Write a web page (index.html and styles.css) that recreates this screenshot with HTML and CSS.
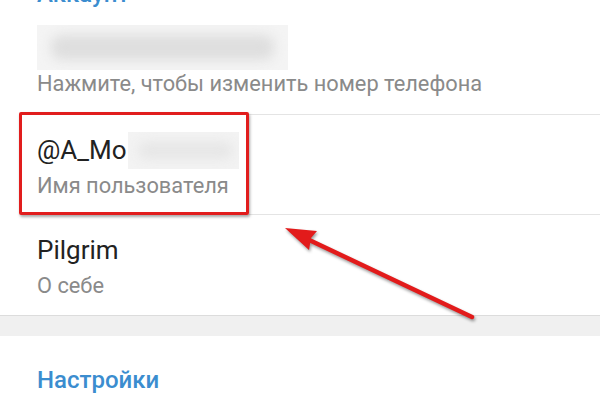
FILE: index.html
```html
<!DOCTYPE html>
<html lang="ru">
<head>
<meta charset="utf-8">
<link rel="stylesheet" href="styles.css">
</head>
<body>
<div class="page">
  <section class="section">
    <div class="section-title section-title--top">Аккаунт</div>
    <div class="row row--first">
      <div class="blur blur--phone"><span class="blur-core"></span></div>
      <div class="label">Нажмите, чтобы изменить номер телефона</div>
    </div>
    <div class="row">
      <div class="value">@A_Mo<span class="blur blur--name"><span class="blur-core"></span></span></div>
      <div class="label">Имя пользователя</div>
    </div>
    <div class="row row--last">
      <div class="value">Pilgrim</div>
      <div class="label">О себе</div>
    </div>
  </section>
  <div class="band"></div>
  <section class="section">
    <div class="section-title section-title--settings">Настройки</div>
  </section>

  <div class="highlight"></div>
  <svg class="arrow" width="600" height="400" viewBox="0 0 600 400">
    <line x1="472" y1="317" x2="305" y2="238" stroke="#e21b1b" stroke-width="4.5" stroke-linecap="round"/>
    <polygon points="285,228 317,231 311,238 309,250" fill="#e21b1b"/>
  </svg>
</div>
</body>
</html>
```
FILE: styles.css
```css
* { box-sizing: border-box; }
html, body {
  margin: 0;
  padding: 0;
  background: #ffffff;
  overflow: hidden;
}
.page {
  position: relative;
  width: 600px;
  height: 400px;
  overflow: hidden;
  font-family: Roboto, "Noto Sans", "Liberation Sans", sans-serif;
}
.section {
  background: #ffffff;
}
.section-title {
  padding-left: 37px;
  font-size: 24px;
  line-height: 28px;
  font-weight: 500;
  color: #3b8dcf;
}
.section-title--top {
  margin-top: -20px;
}
.section-title--settings {
  padding-top: 30px;
}
.row {
  margin-left: 37px;
  padding-top: 19px;
  padding-bottom: 14px;
  border-bottom: 1px solid #e4e4e4;
}
.row--first {
  padding-top: 17px;
  padding-bottom: 16px;
}
.row--last {
  border-bottom: 1px solid #dcdcdc;
  margin-left: 0;
  padding-left: 37px;
  padding-bottom: 15px;
}
.value {
  height: 32px;
  font-size: 26px;
  line-height: 32px;
  color: #222222;
  display: flex;
  align-items: center;
}
.label {
  margin-top: 6px;
  font-size: 21.8px;
  line-height: 28px;
  color: #8a8a8a;
}
.row--first .label {
  margin-top: 0;
}
.blur {
  display: block;
  position: relative;
  overflow: hidden;
  background: #f4f4f4;
}
.blur-core {
  position: absolute;
  left: 14px;
  right: 14px;
  top: 10px;
  bottom: 10px;
  background: #dedede;
  filter: blur(6px);
  border-radius: 10px;
}
.blur--phone {
  width: 251px;
  height: 45px;
}
.blur--name {
  flex: none;
  width: 111px;
  height: 37px;
  margin-left: 1px;
  background: #f3f3f3;
}
.blur--name .blur-core {
  background: #e6e6e6;
  left: 10px;
  right: 6px;
}
.band {
  height: 20px;
  background: #f0f0f0;
}
.highlight {
  position: absolute;
  left: 19px;
  top: 112px;
  width: 230px;
  height: 103px;
  border: 3px solid #e11d1d;
  border-radius: 2px;
  box-shadow: 1px 2px 3px rgba(0, 0, 0, 0.35);
}
.arrow {
  position: absolute;
  left: 0;
  top: 0;
  filter: drop-shadow(1px 2px 1.5px rgba(0, 0, 0, 0.4));
}
```
